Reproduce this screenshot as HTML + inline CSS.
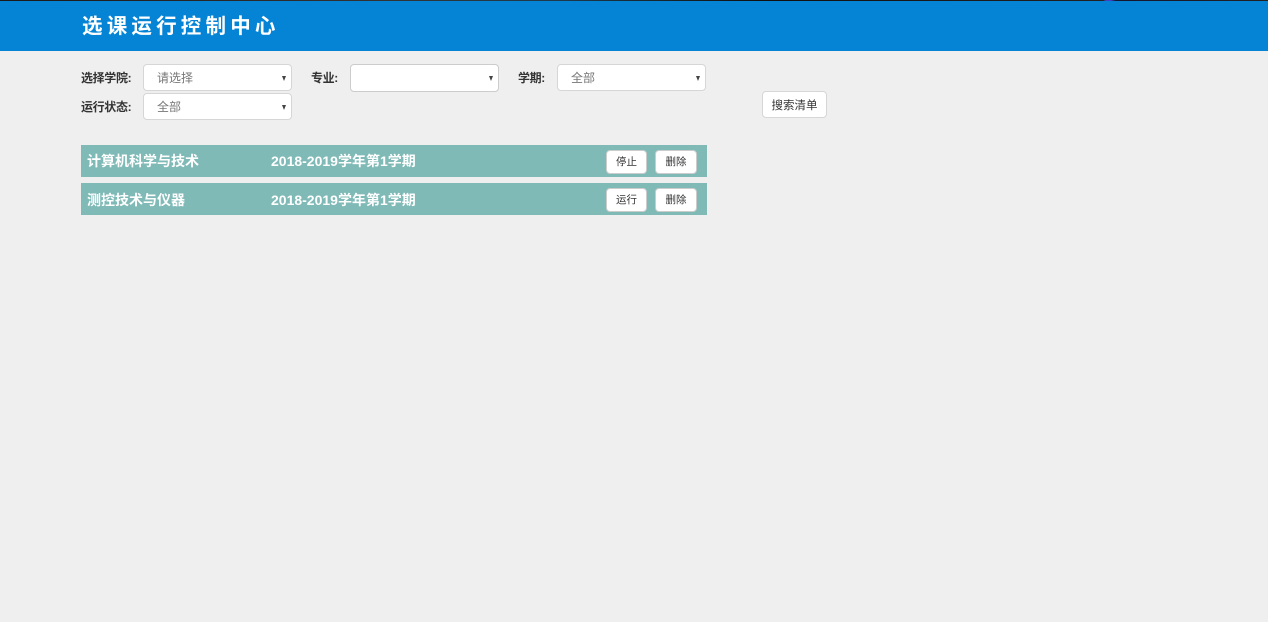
<!DOCTYPE html>
<html>
<head>
<meta charset="utf-8">
<style>
html,body{margin:0;padding:0;width:1268px;height:622px;overflow:hidden;background:#efefef;font-family:"Liberation Sans","Noto Sans CJK SC",sans-serif;}
.abs{position:absolute;white-space:nowrap;}
.top{position:absolute;left:0;top:0;width:1268px;height:51px;background:#0584d6;}
.strip{position:absolute;left:0;top:0;width:1268px;height:1px;background:linear-gradient(90deg,#1a1a1a,#333 30%,#1c3a4c 44%,#111 60%,#222 87%,#4040c8 87.2%,#4040c8 87.6%,#151530 88%,#222);}
.title{left:82px;top:13px;font-size:20.5px;line-height:28px;font-weight:bold;color:#fff;letter-spacing:4.2px;}
.lab{font-size:12px;font-weight:bold;color:#333;line-height:16px;letter-spacing:-.35px;}
.sel{position:absolute;box-sizing:border-box;background:#fff;border:1px solid #d6d6d6;border-radius:4px;font-size:12px;color:#777;line-height:26px;padding-left:13px;}
.car:after{content:"";position:absolute;right:5px;top:11px;border-left:2.5px solid transparent;border-right:2.5px solid transparent;border-top:5px solid #444;}
.row{position:absolute;left:81px;width:626px;background:#7fbab7;}
.row .t{position:absolute;top:0;font-size:14px;font-weight:bold;color:#fff;white-space:nowrap;}
.btn{position:absolute;box-sizing:border-box;background:#fff;border:1px solid #ccc;border-radius:4px;font-size:10.5px;color:#333;text-align:center;width:42px;height:24px;line-height:23px;}
</style>
</head>
<body>
<div class="top"></div>
<div class="strip"></div>
<div class="abs title">选课运行控制中心</div>

<div class="abs lab" style="left:81px;top:70px;">选择学院:</div>
<div class="sel car" style="left:143px;top:64px;width:149px;height:27px;">请选择</div>
<div class="abs lab" style="left:311px;top:70px;">专业:</div>
<div class="sel car" style="left:350px;top:64px;width:149px;height:28px;border-color:#ccc;"></div>
<div class="abs lab" style="left:518px;top:70px;">学期:</div>
<div class="sel car" style="left:557px;top:64px;width:149px;height:27px;">全部</div>
<div class="abs lab" style="left:81px;top:99px;">运行状态:</div>
<div class="sel car" style="left:143px;top:93px;width:149px;height:27px;">全部</div>
<div class="sel" style="left:762px;top:91px;width:65px;height:27px;padding:0;text-align:center;color:#333;font-size:11.5px;line-height:28px;border-color:#d6d6d6;">搜索清单</div>

<div class="row" style="top:145px;height:32px;">
  <div class="t" style="left:6px;line-height:32px;">计算机科学与技术</div>
  <div class="t" style="left:190px;line-height:32px;">2018-2019学年第1学期</div>
  <div class="btn" style="left:525px;top:5px;width:41px;">停止</div>
  <div class="btn" style="left:574px;top:5px;">删除</div>
</div>
<div class="row" style="top:183px;height:32px;">
  <div class="t" style="left:6px;line-height:34px;">测控技术与仪器</div>
  <div class="t" style="left:190px;line-height:34px;">2018-2019学年第1学期</div>
  <div class="btn" style="left:525px;top:5px;width:41px;">运行</div>
  <div class="btn" style="left:574px;top:5px;">删除</div>
</div>
</body>
</html>
